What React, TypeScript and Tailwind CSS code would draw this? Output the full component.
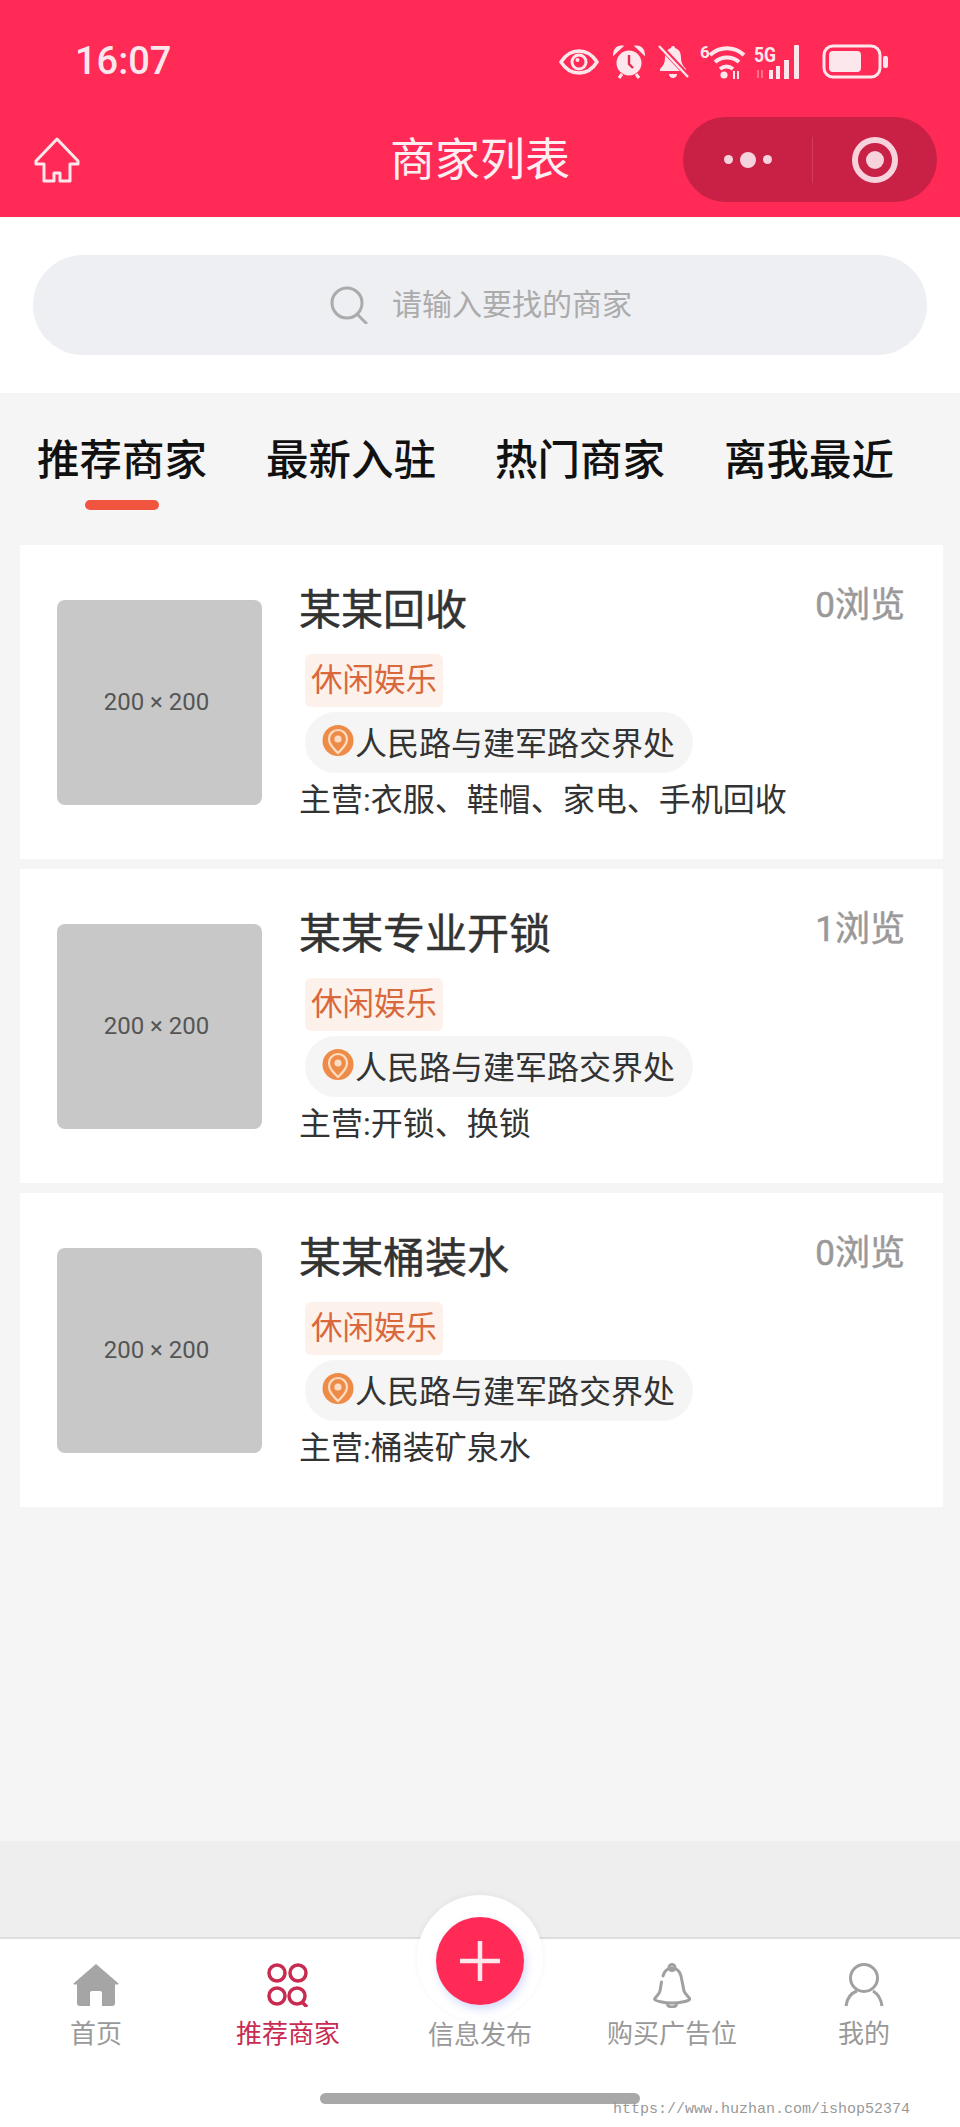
import React from "react";

const FONT = "font-['Roboto','Noto_Sans_CJK_SC',sans-serif]";

const merchants = [
  { name: "某某回收", views: 0, main: "主营:衣服、鞋帽、家电、手机回收" },
  { name: "某某专业开锁", views: 1, main: "主营:开锁、换锁" },
  { name: "某某桶装水", views: 0, main: "主营:桶装矿泉水" },
];

const tabs = ["推荐商家", "最新入驻", "热门商家", "离我最近"];

const StatusIcons = () => (
  <div className="flex items-center text-[#FCE8EC]">
    {/* eye */}
    <svg width="40" height="26" viewBox="0 0 40 26" className="mr-[13px]">
      <path d="M2 13C7 5 13 2 20 2s13 3 18 11c-5 8-11 11-18 11S7 21 2 13Z" fill="none" stroke="currentColor" strokeWidth="3.4" />
      <circle cx="20" cy="13" r="7" fill="none" stroke="currentColor" strokeWidth="3" />
      <circle cx="18.5" cy="11" r="2" fill="currentColor" />
    </svg>
    {/* alarm */}
    <svg width="34" height="34" viewBox="0 0 34 34" className="mr-[11px]">
      <circle cx="17" cy="18" r="12.5" fill="currentColor" />
      <path d="M2 9c0-5 4-8 8-7.500L2 9ZM32 9c0-5-4-8-8-7.500L32 9Z" fill="currentColor" stroke="currentColor" strokeWidth="2" />
      <path d="M7 33l3-4M27 33l-3-4" stroke="currentColor" strokeWidth="3" />
      <path d="M17 10v9l4 4" fill="none" stroke="#E52A52" strokeWidth="2.4" />
    </svg>
    {/* muted bell */}
    <svg width="33" height="35" viewBox="0 0 33 35" className="mr-[9px]">
      <path d="M16 2c-1.500 0-2 1-2 2-5 1.500-6 6-6 10 0 5-2 8-5 11v2h26v-2c-3-3-5-6-5-11 0-4-1-8.500-6-10 0-1-.5-2-2-2Z" fill="currentColor" />
      <path d="M12 30h8c0 2.500-2 4-4 4s-4-1.500-4-4Z" fill="currentColor" />
      <path d="M2 1l29 31" stroke="#FF2A55" strokeWidth="5" />
      <path d="M2 2l29 31" stroke="currentColor" strokeWidth="2.4" />
    </svg>
    {/* wifi */}
    <svg width="46" height="36" viewBox="0 0 46 36" className="mr-[8px] overflow-visible">
      <text x="1" y="14" fontSize="17" fontWeight="700" fontFamily="Roboto" fill="currentColor">6</text>
      <path d="M11 11c10-9 24-9 34 0" fill="none" stroke="currentColor" strokeWidth="4" />
      <path d="M16 18c7-6 17-6 24 0" fill="none" stroke="currentColor" strokeWidth="4" />
      <path d="M21 25c4-3 9-3 13 0" fill="none" stroke="currentColor" strokeWidth="4" />
      <circle cx="25" cy="31" r="3.600" fill="currentColor" />
      <path d="M35 27v8M39 27v8" stroke="currentColor" strokeWidth="2" />
    </svg>
    {/* 5G signal */}
    <svg width="54" height="36" viewBox="0 0 54 36" className="mr-[15px] overflow-visible">
      <text x="1" y="18" fontSize="20" fontWeight="700" fontFamily="Roboto" fill="currentColor" textLength="22" lengthAdjust="spacingAndGlyphs">5G</text>
      <path d="M5 26v8M9 26v8" stroke="currentColor" strokeWidth="1.500" opacity="0.5" />
      <rect x="16" y="26" width="4" height="9" fill="currentColor" />
      <rect x="23" y="22" width="4" height="13" fill="currentColor" />
      <rect x="31" y="16" width="5" height="19" fill="currentColor" />
      <rect x="41" y="1" width="5" height="34" rx="1" fill="currentColor" />
    </svg>
    {/* battery */}
    <svg width="67" height="36" viewBox="0 0 67 36">
      <rect x="2" y="2" width="56" height="31" rx="9" fill="none" stroke="currentColor" strokeWidth="3" />
      <rect x="7" y="7" width="32" height="21" rx="4" fill="currentColor" />
      <rect x="61" y="12" width="5" height="12" rx="2" fill="currentColor" />
    </svg>
  </div>
);

const PinIcon = () => (
  <svg width="32" height="33" viewBox="0 0 32 33" className="mt-[-4px] shrink-0">
    <circle cx="16" cy="16.500" r="15.500" fill="#EE8B47" />
    <path d="M16 29c-5-5-9-9-9-14a9 9 0 0 1 18 0c0 5-4 9-9 14Z" fill="none" stroke="#FBDCC4" strokeWidth="2.200" />
    <circle cx="16" cy="15" r="3.600" fill="#FBDCC4" />
  </svg>
);

const MerchantCard = ({ name, views, main }: { name: string; views: number; main: string }) => (
  <div className="flex h-[314px] items-center bg-white pl-[37px] pr-[38px]">
    <div className="flex h-[205px] w-[205px] shrink-0 items-center justify-center rounded-[8px] bg-[#C8C8C8] pr-[6px] text-[24px] text-[#555]">
      200 × 200
    </div>
    <div className="ml-[37px] flex h-full min-w-0 flex-1 flex-col items-start pt-[41px]">
      <div className="flex w-full items-start justify-between">
        <span className="text-[42px] leading-[50px] text-[#333] [-webkit-text-stroke:0.5px_#333]">{name}</span>
        <span className="text-[35px] leading-[40px] text-[#999] [-webkit-text-stroke:0.5px_#999]">{views}浏览</span>
      </div>
      <span className="mt-[18px] ml-[6px] flex h-[53px] items-center rounded-[6px] bg-[#FDF1EC] px-[6px] text-[31.5px] text-[#D9683A]">
        休闲娱乐
      </span>
      <div className="mt-[5px] ml-[6px] flex h-[61px] items-center rounded-full bg-[#F5F5F5] pr-[18px] pl-[17px]">
        <PinIcon />
        <span className="mt-[3px] ml-[1px] text-[32px] leading-[44px] text-[#333]">人民路与建军路交界处</span>
      </div>
      <p className="mt-[5px] text-[32px] leading-[44px] text-[#333]">{main}</p>
    </div>
  </div>
);

const TabItem = ({
  label,
  icon,
  active,
}: {
  label: string;
  icon: React.ReactNode;
  active?: boolean;
}) => (
  <div className="flex flex-1 flex-col items-center">
    <div className="flex h-[44px] items-center justify-center">{icon}</div>
    <span className={`mt-[9px] text-[26px] leading-[36px] ${active ? "text-[#C92A50]" : "text-[#999]"}`}>{label}</span>
  </div>
);

export default function App() {
  return (
    <div className={`${FONT} flex h-[2127px] w-[960px] flex-col overflow-hidden bg-[#F5F5F5]`}>
      {/* header */}
      <div className="flex h-[217px] shrink-0 flex-col bg-[#FF2A55]">
        <div className="flex h-[117px] shrink-0 items-center justify-between pt-[6px] pr-[71px] pl-[75px]">
          <span className="text-[38px] font-medium text-[#FCE8EC]">16:07</span>
          <StatusIcons />
        </div>
        <div className="grid h-[85px] grid-cols-[1fr_auto_1fr] items-center px-[23px]">
          <svg width="46" height="46" viewBox="0 0 46 46" fill="none" stroke="#FCE8EC" strokeWidth="3" className="ml-[11px]">
            <path d="M23 2 2 24v3h8v17h10v-8h6v8h10V27h8v-3L23 2Z" strokeLinejoin="round" />
          </svg>
          <span className="mt-[2px] text-[45px] leading-none text-[#FDEEF1]">商家列表</span>
          <div className="flex h-[85px] w-[254px] items-center justify-self-end rounded-full bg-[#C92045]">
            <div className="flex w-[129px] items-center justify-center gap-[7px]">
              <span className="h-[9px] w-[9px] rounded-full bg-[#F6D3DC]" />
              <span className="h-[16px] w-[16px] rounded-full bg-[#F6D3DC]" />
              <span className="h-[9px] w-[9px] rounded-full bg-[#F6D3DC]" />
            </div>
            <div className="h-[46px] w-px bg-[#D53A5A]" />
            <div className="flex flex-1 items-center justify-center">
              <div className="flex h-[46px] w-[46px] items-center justify-center rounded-full border-[6px] border-[#F6D3DC]">
                <span className="h-[18px] w-[18px] rounded-full bg-[#F6D3DC]" />
              </div>
            </div>
          </div>
        </div>
      </div>

      {/* search */}
      <div className="flex h-[176px] shrink-0 items-start bg-white px-[33px] pt-[38px]">
        <div className="flex h-[100px] w-[897px] items-center justify-center rounded-full bg-[#EEEFF3]">
          <svg width="38" height="38" viewBox="0 0 38 38" fill="none" stroke="#ABABAB" strokeWidth="3" className="ml-[2px]">
            <circle cx="17" cy="17" r="15" />
            <path d="m27 28 10 10" />
          </svg>
          <span className="ml-[24px] text-[30px] leading-none text-[#ABABAB]">请输入要找的商家</span>
        </div>
      </div>

      {/* tabs */}
      <div className="flex shrink-0 gap-[59px] pt-[40px] pb-[35px] pl-[37px]">
        {tabs.map((tab, i) => (
          <div key={tab} className="flex flex-col items-center">
            <span className="text-[42.5px] leading-[56px] font-medium text-[#111]">{tab}</span>
            <span className={`mt-[11px] h-[10px] w-[74px] rounded-full ${i === 0 ? "bg-[#F2553F]" : ""}`} />
          </div>
        ))}
      </div>

      {/* merchant list */}
      <div className="flex flex-1 flex-col gap-[10px] pr-[17px] pl-[20px]">
        {merchants.map((m) => (
          <MerchantCard key={m.name} {...m} />
        ))}
      </div>

      <div className="h-[98px] shrink-0 border-b-2 border-[#DEDEDE] bg-[#EEEEEE]" />

      {/* bottom bar */}
      <div className="relative h-[188px] shrink-0 bg-white pt-[24px]">
        <div className="flex">
          <TabItem
            label="首页"
            icon={
              <svg width="46" height="43" viewBox="0 0 46 43" fill="#A5A5A5">
                <path d="M23 0 45 19a.8.8 0 0 1-.5 1.500H42V39a3 3 0 0 1-3 3H29V29a2 2 0 0 0-2-2h-8a2 2 0 0 0-2 2v13H7a3 3 0 0 1-3-3V20.500H1.500A.8.8 0 0 1 1 19L23 0Z" />
              </svg>
            }
          />
          <TabItem
            active
            label="推荐商家"
            icon={
              <svg width="42" height="44" viewBox="0 0 42 44" fill="none" stroke="#C92A50" strokeWidth="3.500">
                <circle cx="10" cy="10" r="8" />
                <circle cx="31" cy="10" r="8" />
                <circle cx="10" cy="33" r="8" />
                <circle cx="30" cy="33" r="8" />
                <path d="m35 39 5 5" />
              </svg>
            }
          />
          <div className="relative flex flex-1 flex-col items-center">
            <div className="absolute top-[-68px] left-1/2 flex h-[126px] w-[126px] -translate-x-1/2 justify-center rounded-full bg-white pt-[22px] shadow-[0_-1px_6px_rgba(0,0,0,0.05)]">
              <div className="flex h-[88px] w-[88px] items-center justify-center rounded-full bg-[#FF2A55] shadow-[2px_4px_8px_rgba(110,130,240,0.3)]">
                <svg width="40" height="40" viewBox="0 0 40 40" stroke="#FCE8EC" strokeWidth="4.500">
                  <path d="M20 0v40M0 20h40" />
                </svg>
              </div>
            </div>
            <span className="relative mt-[54px] text-[26px] leading-[36px] text-[#999]">信息发布</span>
          </div>
          <TabItem
            label="购买广告位"
            icon={
              <svg width="38" height="45" viewBox="0 0 38 45" fill="none" stroke="#A0A0A0" strokeWidth="3">
                <path d="M10 13c1-5 5-8 9-8s8 3 9 8l3 15c1 3 4 5 6 8-1 2-10 4-18 4S2 38 1.500 36c2-3 5-5 5.500-8 .5-3 1-6 1.500-9" strokeLinecap="round" />
                <circle cx="19" cy="4.500" r="3" />
                <path d="M14 41c1 2 3 3 5 3s4-1 5-3" />
              </svg>
            }
          />
          <TabItem
            label="我的"
            icon={
              <svg width="40" height="44" viewBox="0 0 40 44" fill="none" stroke="#A0A0A0" strokeWidth="3">
                <circle cx="20" cy="15" r="13.500" />
                <path d="M2 43c1-8 5-13 11-15M38 43c-1-7-4-12-9-15" />
              </svg>
            }
          />
        </div>
        <div className="mx-auto mt-[40px] h-[11px] w-[320px] rounded-full bg-[#A8A8A8]" />
        <span className="absolute top-[161px] left-[613px] font-['Liberation_Mono',monospace] text-[15px] leading-[20px] whitespace-nowrap text-[#999]">
          https://www.huzhan.com/ishop52374
        </span>
      </div>
    </div>
  );
}
